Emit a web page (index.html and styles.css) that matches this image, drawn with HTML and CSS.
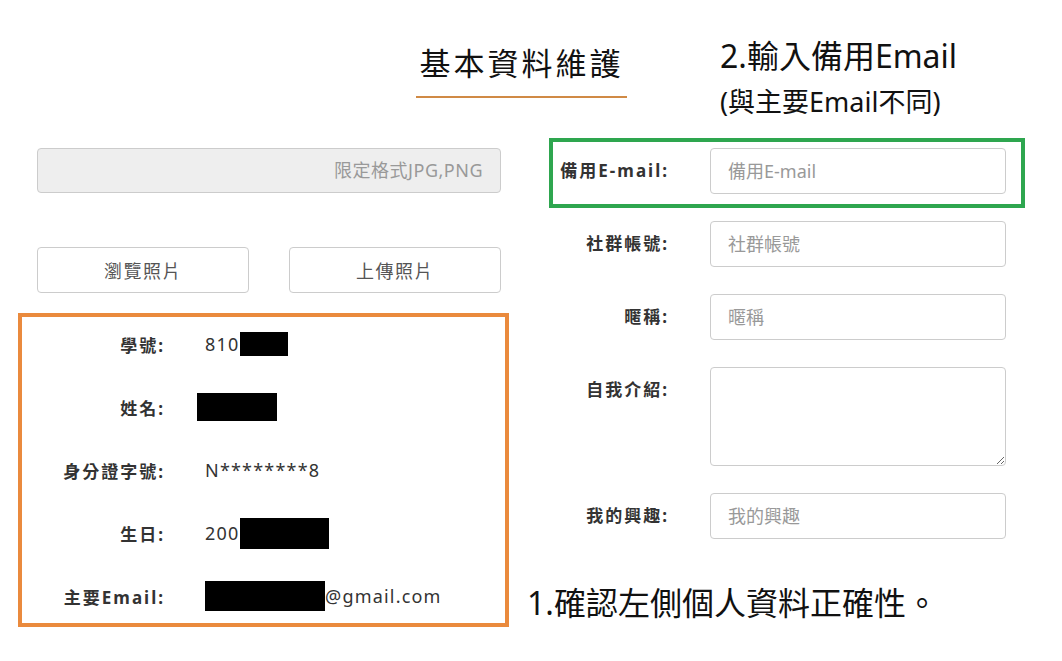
FILE: index.html
```html
<!DOCTYPE html>
<html lang="zh-Hant">
<head>
  <meta charset="UTF-8" />
  <meta name="viewport" content="width=device-width, initial-scale=1.0"/>
  <title>基本資料維護</title>
  <link rel="stylesheet" href="styles.css">
</head>
<body>
  <div class="header">
    <h1 class="title">基本資料維護</h1>
    <div class="note-top">
      <div class="note-line1">2.輸入備用Email</div>
      <div class="note-line2">(與主要Email不同)</div>
    </div>
  </div>

  <div class="main">
    <div class="left-col">
      <div class="upload-box">限定格式JPG,PNG</div>

      <div class="btn-row">
        <button class="btn">瀏覽照片</button>
        <button class="btn">上傳照片</button>
      </div>

      <div class="info-box">
        <div class="info-row">
          <span class="info-label">學號:</span>
          <span class="info-value">810<span class="mask" style="width:48px;height:24px"></span></span>
        </div>
        <div class="info-row">
          <span class="info-label">姓名:</span>
          <span class="info-value"><span class="mask shift" style="width:80px;height:28px"></span></span>
        </div>
        <div class="info-row">
          <span class="info-label">身分證字號:</span>
          <span class="info-value">N********8</span>
        </div>
        <div class="info-row">
          <span class="info-label">生日:</span>
          <span class="info-value">200<span class="mask" style="width:89px;height:31px"></span></span>
        </div>
        <div class="info-row">
          <span class="info-label">主要Email:</span>
          <span class="info-value"><span class="mask" style="width:120px;height:30px"></span>@gmail.com</span>
        </div>
      </div>
    </div>

    <div class="right-col">
      <div class="form-row highlight">
        <label class="form-label">備用E-mail:</label>
        <input class="form-input" type="text" placeholder="備用E-mail" />
      </div>
      <div class="form-row">
        <label class="form-label">社群帳號:</label>
        <input class="form-input" type="text" placeholder="社群帳號" />
      </div>
      <div class="form-row">
        <label class="form-label">暱稱:</label>
        <input class="form-input" type="text" placeholder="暱稱" />
      </div>
      <div class="form-row">
        <label class="form-label">自我介紹:</label>
        <textarea class="form-input form-area"></textarea>
      </div>
      <div class="form-row">
        <label class="form-label">我的興趣:</label>
        <input class="form-input" type="text" placeholder="我的興趣" />
      </div>

      <div class="note-bottom">1.確認左側個人資料正確性。</div>
    </div>
  </div>
</body>
</html>
```

FILE: styles.css
```css
body {
  margin: 0;
  font-family: "Noto Sans", "Noto Sans CJK TC", sans-serif;
  color: #333;
  background: #fff;
}
.header {
  display: flex;
  align-items: flex-start;
  height: 138px;
}
.title {
  margin: 43px 0 0 416px;
  width: 211px;
  padding-bottom: 13px;
  border-bottom: 2px solid #d08a45;
  font-size: 31px;
  font-weight: normal;
  line-height: 40px;
  letter-spacing: 3px;
  text-align: center;
  color: #111;
  white-space: nowrap;
}
.note-top {
  margin: 30px 0 0 93px;
  color: #111;
}
.note-line1 {
  font-size: 32px;
  line-height: 52px;
}
.note-line2 {
  font-size: 27px;
  line-height: 38px;
  margin-top: 1px;
}
.main {
  display: flex;
  align-items: flex-start;
}
.left-col {
  margin-left: 37px;
  width: 464px;
  padding-top: 10px;
}
.upload-box {
  height: 45px;
  box-sizing: border-box;
  background: #eee;
  border: 1px solid #ccc;
  border-radius: 4px;
  padding-right: 17px;
  text-align: right;
  line-height: 43px;
  font-size: 18px;
  letter-spacing: 0.5px;
  color: #999;
}
.btn-row {
  display: flex;
  gap: 40px;
  margin-top: 54px;
}
.btn {
  flex: 1;
  height: 46px;
  background: #fff;
  border: 1px solid #ccc;
  border-radius: 4px;
  font-family: inherit;
  font-size: 18px;
  color: #555;
  letter-spacing: 1.5px;
}
.info-box {
  margin: 20px 0 0 -19px;
  width: 491px;
  box-sizing: border-box;
  border: 4px solid #ea8a3d;
  padding: 12px 0;
  display: flex;
  flex-direction: column;
  gap: 33px;
}
.info-row {
  display: flex;
  align-items: center;
  height: 30px;
}
.info-label {
  width: 143px;
  text-align: right;
  font-size: 17px;
  font-weight: bold;
  letter-spacing: 2px;
  color: #333;
}
.info-value {
  margin-left: 40px;
  display: flex;
  align-items: center;
  font-size: 18px;
  letter-spacing: 1.2px;
  color: #333;
}
.mask {
  display: inline-block;
  background: #000;
}
.mask.shift {
  margin-left: -8px;
}
.right-col {
  margin-left: 48px;
  width: 476px;
}
.form-row {
  display: flex;
  align-items: flex-start;
  border: 4px solid transparent;
  margin-bottom: 19px;
}
.form-row.highlight {
  border-color: #2ea64f;
  padding: 6px 0 10px;
  margin-bottom: 13px;
}
.form-row:not(.highlight) {
  border-width: 0 4px;
  margin-bottom: 27px;
}
.form-label {
  width: 116px;
  text-align: right;
  font-size: 17px;
  font-weight: bold;
  line-height: 46px;
  letter-spacing: 2px;
  color: #333;
}
.form-input {
  margin-left: 41px;
  width: 296px;
  height: 46px;
  box-sizing: border-box;
  border: 1px solid #ccc;
  border-radius: 4px;
  padding: 0 17px;
  font-family: inherit;
  font-size: 18px;
  color: #333;
}
.form-input::placeholder {
  color: #999;
}
.form-area {
  height: 99px;
  resize: vertical;
}
.form-row:nth-child(5) {
  margin-bottom: 0;
}
.note-bottom {
  margin: 44px 0 0 -22px;
  font-size: 32px;
  line-height: 40px;
  color: #111;
  white-space: nowrap;
}
```
